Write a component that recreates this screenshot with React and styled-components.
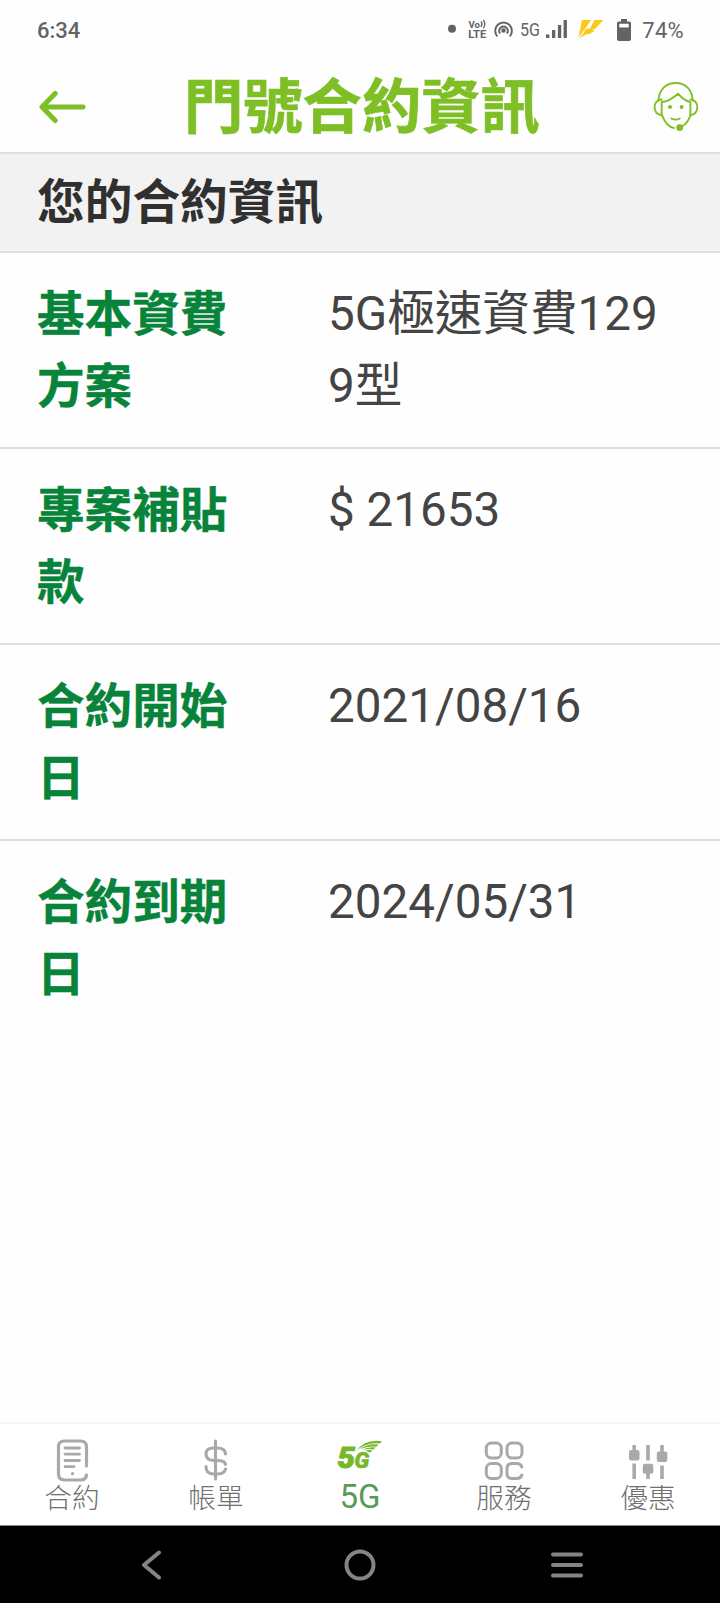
import React from "react";
import styled, { createGlobalStyle } from "styled-components";

const colors = {
  lime: "#7fbf26",
  green: "#07833a",
  text: "#444444",
  heading: "#303030",
  line: "#dfdfdf",
  status: "#636363",
  icon: "#a9a9a9",
  nav: "#707070",
};

const contract = [
  { label: "基本資費方案", value: "5G極速資費1299型" },
  { label: "專案補貼款", value: "$ 21653" },
  { label: "合約開始日", value: "2021/08/16" },
  { label: "合約到期日", value: "2024/05/31" },
];

const StatusIcons = () => (
  <svg width="121" height="28" viewBox="0 0 121 28">
    <circle cx="5" cy="12.700" r="4" fill={colors.status} />
    <g fill={colors.status} fontFamily="Roboto, sans-serif" fontWeight="700">
      <text x="21.500" y="11.500" fontSize="9" textLength="11.500" lengthAdjust="spacingAndGlyphs">Vo</text>
      <text x="21.200" y="22" fontSize="10.800" textLength="18" lengthAdjust="spacingAndGlyphs">LTE</text>
      <text x="73" y="20" fontSize="19" fontWeight="400" textLength="20" lengthAdjust="spacingAndGlyphs">5G</text>
    </g>
    <g fill="none" stroke={colors.status}>
      <path d="M34 5.500q2 2.500 0 5.500M36.300 4q3 4 0 8.500" strokeWidth="1.300" />
      <path d="M50.300 20.300a8.300 8.300 0 1 1 12.500 0M53.100 17.500a4.300 4.300 0 1 1 6.800 0" strokeWidth="2" />
    </g>
    <circle cx="56.500" cy="14.500" r="2.200" fill={colors.status} />
    <path d="M99 18.500h3.300V22H99zM105 14h3.300v8H105zM110.900 9h3.300v13h-3.300zM116.600 4h3.300v18h-3.300z" fill={colors.status} />
  </svg>
);

const BoltIcon = () => (
  <svg width="27" height="20" viewBox="0 1 27 20">
    <path d="M4 1h9L8 8.500 5.500 12 0.500 18.500z" fill="#fbc91a" />
    <path d="M16.500 1h9L17 10h-3.500l3.500 1.500L11.500 15H9L1 19.200l6-6.700H5.500L9 9.500h3z" fill="#fbc91a" />
  </svg>
);

const BatteryIcon = () => (
  <svg width="14" height="22" viewBox="0 0 14 22">
    <path d="M4 0h6v2.500h2.500Q14 2.500 14 4v16q0 2-2 2H2q-2 0-2-2V4q0-1.500 1.500-1.500H4zM2.300 4.800v3.700h9.400V4.800z" fillRule="evenodd" fill={colors.status} />
  </svg>
);

const BackIcon = () => (
  <svg width="48" height="34" viewBox="0 0 48 34">
    <path d="M17.200 3.500L4 17l13.200 13.500M5 17H45" fill="none" stroke={colors.lime} strokeWidth="5" strokeLinecap="round" strokeLinejoin="round" />
  </svg>
);

const AgentIcon = () => (
  <svg width="46" height="51" viewBox="0 0 46 51">
    <g fill="none" stroke={colors.lime} strokeWidth="1.900" strokeLinecap="round" strokeLinejoin="round">
      <path d="M5.500 19.500C6 8.500 13 2 22.700 2s16.600 6.500 17 17.500" />
      <path d="M8.700 18.500C-.8 18.500-.8 34 8.700 34.200V21q7.500-.5 16.400-8.300Q31 20 37.400 21v13.200c9.200-.2 9.200-15.700 0-15.700" />
      <path d="M9 34.200Q13.500 46 21 47M37.400 34.200Q35 42 29.500 45" />
      <path d="M18.300 37.500q4.400 2.200 8.500 0" />
    </g>
    <g fill={colors.lime}>
      <circle cx="17" cy="26" r="2" />
      <circle cx="28.600" cy="26" r="2" />
      <circle cx="26.700" cy="46.600" r="3.400" />
    </g>
  </svg>
);

const ContractIcon = () => (
  <svg width="48" height="44" viewBox="0 0 48 44">
    <g fill="none" stroke={colors.icon} strokeWidth="3.200" strokeLinecap="round">
      <path d="M38.500 28V9q0-6-6-6h-16q-6 0-6 6v27q0 6 6 6h16q5.500 0 6-5" />
      <path d="M17 10h14.500M17 16.200h14.500M17 22.500h14.500M17 28.700h9" strokeWidth="2.800" />
    </g>
    <circle cx="24.500" cy="35.700" r="1.600" fill={colors.icon} />
  </svg>
);

const BillIcon = () => (
  <svg width="48" height="44" viewBox="0 0 48 44">
    <path d="M23.500 3v38M33.500 16q-.5-6-8-6h-4q-7.500 0-7.500 6t7.500 6.500h4q7.500 0 8 4M33.500 31q-1 5-8 5h-4q-7.500 0-7.500-7.500" fill="none" stroke={colors.icon} strokeWidth="3.100" strokeLinecap="round" />
  </svg>
);

const FiveGIcon = () => (
  <svg width="48" height="44" viewBox="0 0 48 44" overflow="visible">
    <g fill="#76b82a" stroke="#76b82a" fontFamily="Roboto, sans-serif" fontWeight="900" fontStyle="italic">
      <text x="1.500" y="29.500" fontSize="30" textLength="17.500" lengthAdjust="spacingAndGlyphs">5</text>
      <text x="18.300" y="29.500" fontSize="22" strokeWidth="0.500" textLength="15" lengthAdjust="spacingAndGlyphs">G</text>
    </g>
    <g fill="#76b82a">
      <path d="M20.500 13Q29 .5 46 3.200q-1 1.600-2.500 2.300Q30 4 20.500 13z" />
      <path d="M24 11.300Q32 5 42.500 6.500q-1 1.600-2.300 2.200Q32 7.500 24 11.300z" />
      <path d="M26 12Q32 8.500 39.500 9.500q-1 1.500-2.300 2Q32 10.500 26 12z" />
      <path d="M29 12.800q4-1.300 7.500-.500-1.200 1.700-3 2.200-2-1.300-4.500-1.700z" />
    </g>
  </svg>
);

const ServiceIcon = () => (
  <svg width="48" height="44" viewBox="0 0 48 44">
    <g fill="none" stroke={colors.icon} strokeWidth="3" strokeLinecap="round">
      <rect x="6.300" y="5" width="15" height="15" rx="5" />
      <rect x="27" y="5" width="15" height="15" rx="5" />
      <rect x="6.300" y="25.500" width="15" height="15" rx="5" />
      <path d="M41.800 29q-1-3.500-5-3.500H32q-5 0-5 5v5q0 5 5 5h4.800q4 0 5-3.500" />
    </g>
  </svg>
);

const OfferIcon = () => (
  <svg width="48" height="44" viewBox="0 0 48 44">
    <g stroke={colors.icon} strokeWidth="3.600">
      <path d="M10.200 7v10M10.200 25.500V41M24 7v15.500M24 28v13M38 7v12M38 27.500V41" />
    </g>
    <g fill={colors.icon}>
      <rect x="5" y="12" width="10.500" height="10.500" rx="2" />
      <rect x="18.800" y="25.800" width="10.500" height="10" rx="2" />
      <rect x="32.800" y="13.500" width="10.500" height="10.500" rx="2" />
    </g>
  </svg>
);

const tabs = [
  { name: "合約", Icon: ContractIcon },
  { name: "帳單", Icon: BillIcon },
  { name: "5G", Icon: FiveGIcon, active: true },
  { name: "服務", Icon: ServiceIcon },
  { name: "優惠", Icon: OfferIcon },
];

export default function App() {
  return (
    <>
      <GlobalStyle />
      <Screen>
        <StatusBar>
          <Clock>6:34</Clock>
          <StatusRight>
            <StatusIcons />
            <BoltIcon />
            <BatteryIcon />
            <Percent>74%</Percent>
          </StatusRight>
        </StatusBar>
        <Header>
          <HeaderButton aria-label="返回">
            <BackIcon />
          </HeaderButton>
          <PageTitle>門號合約資訊</PageTitle>
          <HeaderButton aria-label="客服">
            <AgentIcon />
          </HeaderButton>
        </Header>
        <SectionTitle>您的合約資訊</SectionTitle>
        <Details>
          {contract.map((item) => (
            <Row key={item.label}>
              <Label>{item.label}</Label>
              <Value>{item.value}</Value>
            </Row>
          ))}
        </Details>
        <TabBar>
          {tabs.map(({ name, Icon, active }) => (
            <Tab key={name}>
              <Icon />
              <TabLabel $active={active}>{name}</TabLabel>
            </Tab>
          ))}
        </TabBar>
        <SystemBar>
          <svg width="20" height="30" viewBox="0 0 20 30">
            <path d="M17 2.500L2 15l15 12.500" fill="none" stroke="#848484" strokeWidth="4" strokeLinecap="round" strokeLinejoin="round" />
          </svg>
          <HomeIcon width="32" height="32" viewBox="0 0 32 32">
            <circle cx="16" cy="16" r="13.500" fill="none" stroke="#848484" strokeWidth="4" />
          </HomeIcon>
          <svg width="32" height="26" viewBox="0 0 32 26">
            <path d="M2 2.500h28M2 13h28M2 23.500h28" stroke="#848484" strokeWidth="4" strokeLinecap="round" />
          </svg>
        </SystemBar>
      </Screen>
    </>
  );
}

const GlobalStyle = createGlobalStyle`
  * {
    box-sizing: border-box;
  }
  body {
    margin: 0;
    background: #fefefe;
    font-family: Roboto, "Noto Sans CJK TC", sans-serif;
  }
  svg {
    display: block;
    flex-shrink: 0;
  }
`;

const Screen = styled.div`
  width: 720px;
  height: 1603px;
  display: flex;
  flex-direction: column;
  overflow: hidden;
`;

const StatusBar = styled.div`
  height: 60px;
  padding: 0 36px 0 37px;
  display: flex;
  align-items: center;
  justify-content: space-between;
  color: ${colors.status};
  font-size: 22px;
`;

const Clock = styled.span`
  font-weight: 500;
`;

const StatusRight = styled.div`
  display: flex;
  align-items: center;
  & > svg:nth-child(2) {
    margin-left: 10px;
  }
  & > svg:nth-child(3) {
    margin-left: 12px;
  }
`;

const Percent = styled.span`
  margin-left: 11px;
  letter-spacing: 0.3px;
`;

const Header = styled.header`
  height: 94px;
  padding: 1px 21px 0 38px;
  display: grid;
  grid-template-columns: 146px 1fr 46px;
  align-items: center;
  border-bottom: 2px solid ${colors.line};
`;

const HeaderButton = styled.button`
  padding: 0;
  border: 0;
  background: none;
`;

const PageTitle = styled.h1`
  margin: 0;
  padding-top: 2px;
  color: ${colors.lime};
  font-size: 59.300px;
  line-height: 88px;
  font-weight: 700;
  -webkit-text-stroke: 0.7px ${colors.lime};
`;

const SectionTitle = styled.h2`
  margin: 0;
  height: 99px;
  padding: 3px 0 0 37px;
  background: #f2f2f2;
  border-bottom: 2px solid ${colors.line};
  color: ${colors.heading};
  font-size: 47.700px;
  line-height: 93px;
  font-weight: 700;
`;

const Details = styled.dl`
  margin: 0;
  flex: 1;
`;

const Row = styled.div`
  height: 196px;
  padding: 25px 37px 0;
  display: grid;
  grid-template-columns: 291px 1fr;
  font-size: 47.600px;
  line-height: 72px;
  &:not(:last-child) {
    border-bottom: 2px solid ${colors.line};
  }
`;

const Label = styled.dt`
  width: 200px;
  padding-top: 1px;
  color: ${colors.green};
  font-weight: 700;
  -webkit-text-stroke: 0.4px ${colors.green};
`;

const Value = styled.dd`
  margin: 0;
  color: ${colors.text};
  word-break: break-all;
`;

const TabBar = styled.nav`
  height: 104px;
  padding-top: 14px;
  display: grid;
  grid-template-columns: repeat(5, 1fr);
  border-top: 2px solid #f6f6f6;
  border-bottom: 1px solid #8a8a8a;
  background: #fff;
`;

const Tab = styled.div`
  display: flex;
  flex-direction: column;
  align-items: center;
`;

const TabLabel = styled.span`
  padding-top: ${(props) => (props.$active ? "0" : "2px")};
  color: ${(props) => (props.$active ? "#5a9a57" : colors.nav)};
  font-size: ${(props) => (props.$active ? "33px" : "27.700px")};
  font-weight: ${(props) => (props.$active ? 400 : 300)};
  line-height: 30px;
`;

const SystemBar = styled.div`
  height: 77px;
  padding: 0 137px 0 142px;
  display: flex;
  align-items: center;
  justify-content: space-between;
  background: #000;
`;

const HomeIcon = styled.svg`
  margin-left: 7px;
`;
